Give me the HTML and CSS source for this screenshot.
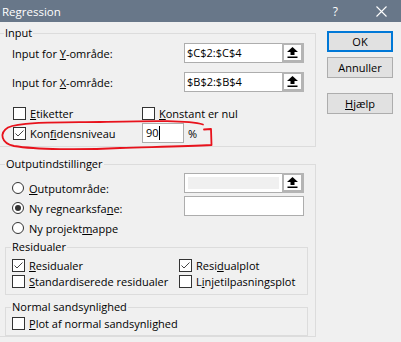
FILE: index.html
```html
<!DOCTYPE html>
<html lang="da">
<head>
    <meta charset="UTF-8">
    <title>Regression</title>
    <link rel="stylesheet" href="styles.css">
</head>
<body>

    <div class="titlebar">
        <span class="title">Regression</span>
        <span class="tb-help">?</span>
        <svg class="tb-close" width="11" height="11" viewBox="0 0 11 11">
            <path d="M0.5 0.5L10.5 10.5M10.5 0.5L0.5 10.5" stroke="#fff" stroke-width="1.1"/>
        </svg>
    </div>

    <div class="dialog">
        <div class="main">
            <fieldset class="group group-input">
                <legend>Input</legend>
                <div class="input-body">
                    <div class="range-row">
                        <span class="range-label">Input for <u>Y</u>-område:</span>
                        <div class="refedit">
                            <span class="ref-text">$C$2:$C$4</span>
                            <span class="ref-btn"><svg width="11" height="11" viewBox="0 0 11 11"><path d="M5.5 0L11 5H7.5V8H3.5V5H0Z" fill="#000"/><rect x="0.5" y="9.5" width="10" height="1.5" fill="#000"/></svg></span>
                        </div>
                    </div>
                    <div class="range-row">
                        <span class="range-label">Input for <u>X</u>-område:</span>
                        <div class="refedit">
                            <span class="ref-text">$B$2:$B$4</span>
                            <span class="ref-btn"><svg width="11" height="11" viewBox="0 0 11 11"><path d="M5.5 0L11 5H7.5V8H3.5V5H0Z" fill="#000"/><rect x="0.5" y="9.5" width="10" height="1.5" fill="#000"/></svg></span>
                        </div>
                    </div>

                    <div class="check-rows">
                        <div class="check-row">
                            <label class="check col-wide"><span class="box"></span><span><u>E</u>tiketter</span></label>
                            <label class="check"><span class="box"></span><span><u>K</u>onstant er nul</span></label>
                        </div>
                        <div class="check-row">
                            <label class="check col-wide"><span class="box checked"><svg width="11" height="11" viewBox="0 0 11 11"><path d="M1.5 5.5L4 8L9.5 2.5" fill="none" stroke="#444" stroke-width="1"/></svg></span><span>Kon<u>f</u>idensniveau</span></label>
                            <span class="level">90<span class="caret"></span></span>
                            <span class="percent">%</span>
                        </div>
                    </div>
                </div>
            </fieldset>

            <fieldset class="group group-output">
                <legend>Outputindstillinger</legend>
                <div class="out-grid">
                    <div class="radio-col">
                        <div class="radio-row"><span class="radio"></span><span><u>O</u>utputområde:</span></div>
                        <div class="radio-row"><span class="radio on"></span><span>Ny regnearksfa<u>n</u>e:</span></div>
                        <div class="radio-row"><span class="radio"></span><span>Ny projekt<u>m</u>appe</span></div>
                    </div>
                    <div class="box-col">
                        <div class="refedit disabled">
                            <span class="ref-text"></span>
                            <span class="ref-btn"><svg width="11" height="11" viewBox="0 0 11 11"><path d="M5.5 0L11 5H7.5V8H3.5V5H0Z" fill="#000"/><rect x="0.5" y="9.5" width="10" height="1.5" fill="#000"/></svg></span>
                        </div>
                        <div class="textbox"></div>
                    </div>
                </div>

                <fieldset class="group group-res">
                    <legend>Residualer</legend>
                    <div class="res-body">
                        <div class="res-row">
                            <label class="check col-res"><span class="box checked"><svg width="11" height="11" viewBox="0 0 11 11"><path d="M1.5 5.5L4 8L9.5 2.5" fill="none" stroke="#444" stroke-width="1"/></svg></span><span><u>R</u>esidualer</span></label>
                            <label class="check"><span class="box checked"><svg width="11" height="11" viewBox="0 0 11 11"><path d="M1.5 5.5L4 8L9.5 2.5" fill="none" stroke="#444" stroke-width="1"/></svg></span><span>Resi<u>d</u>ualplot</span></label>
                        </div>
                        <div class="res-row">
                            <label class="check col-res"><span class="box"></span><span><u>S</u>tandardiserede residualer</span></label>
                            <label class="check"><span class="box"></span><span>L<u>i</u>njetilpasningsplot</span></label>
                        </div>
                    </div>
                </fieldset>

                <fieldset class="group group-normal">
                    <legend>Normal sandsynlighed</legend>
                    <div class="normal-body">
                        <div class="res-row">
                            <label class="check"><span class="box"></span><span><u>P</u>lot af normal sandsynlighed</span></label>
                        </div>
                    </div>
                </fieldset>
            </fieldset>
        </div>

        <div class="buttons">
            <button class="btn btn-default">OK</button>
            <button class="btn">Annuller</button>
            <button class="btn btn-help"><u>H</u>jælp</button>
        </div>
    </div>

    <!-- rød markering tegnet oven på dialogen -->
    <svg class="scribble" width="401" height="342" viewBox="0 0 401 342">
        <path d="M204 129.5L211 129L211.5 145C185 146.5 150 147 120 148C80 150 35 149.5 14 146C1 143 -1 133 8 127.5C20 121.5 60 122.5 100 122C150 121 188 120 203 124.5"
              fill="none" stroke="#e8121c" stroke-width="1.8" stroke-linecap="round" stroke-linejoin="round"/>
    </svg>

</body>
</html>
```

FILE: styles.css
```css
body {
    margin: 0;
    width: 401px;
    height: 342px;
    overflow: hidden;
    position: relative;
    background-color: #f0f0f0;
    font-family: "Open Sans", "Noto Sans", sans-serif;
    font-size: 11px;
    color: #000;
}

u {
    text-underline-offset: 1px;
}

.titlebar {
    height: 22px;
    background-color: #687789;
    color: #fff;
    display: flex;
    align-items: center;
    padding-left: 2px;
    font-size: 11.5px;
}

.titlebar .title {
    flex: 1;
}

.tb-help {
    margin-right: 38px;
    font-size: 12px;
}

.tb-close {
    margin-right: 14px;
}

.dialog {
    display: flex;
    padding-top: 4px;
}

.main {
    width: 318px;
    margin-left: -2px;
}

/* gruppebokse */
.group {
    margin: 0;
    padding: 0;
    border: 1px solid #dcdcdc;
    min-width: 0;
}

.group legend {
    padding: 0 1px;
    line-height: 14px;
}

.group-input legend {
    margin-left: 5px;
}

.input-body {
    padding: 3px 11px 3px 13px;
}

.range-row {
    display: flex;
    align-items: center;
    height: 20px;
}

.range-row + .range-row {
    margin-top: 9px;
}

.range-label {
    width: 172px;
}

.refedit {
    width: 120px;
    height: 20px;
    box-sizing: border-box;
    border: 1px solid #adadad;
    background-color: #fff;
    display: flex;
}

.ref-text {
    flex: 1;
    padding-left: 2px;
    line-height: 18px;
}

.ref-btn {
    width: 22px;
    height: 20px;
    box-sizing: border-box;
    margin: -1px -1px -1px 0;
    border: 2px solid #b4b4b4;
    border-right-width: 3px;
    border-bottom-width: 3px;
    background-color: #fdfdfd;
    display: flex;
    align-items: center;
    justify-content: center;
}

.refedit.disabled .ref-text {
    margin: 3px;
    padding: 0;
    background-color: #f0f0f0;
}

.textbox {
    width: 120px;
    height: 20px;
    box-sizing: border-box;
    border: 1px solid #adadad;
    background-color: #fff;
}

.check-rows {
    margin-top: 11px;
    padding-left: 1px;
}

.check-row {
    display: flex;
    align-items: center;
    height: 20px;
}

.check {
    display: flex;
    align-items: center;
}

.col-wide {
    width: 129px;
}

.box {
    width: 13px;
    height: 13px;
    box-sizing: border-box;
    border: 1px solid #333;
    background-color: #fff;
    margin-right: 4px;
    display: flex;
}

.box svg {
    display: block;
}

.level {
    width: 42px;
    height: 20px;
    box-sizing: border-box;
    border: 1px solid #adadad;
    background-color: #fff;
    padding-left: 3px;
    line-height: 18px;
    display: flex;
    align-items: center;
}

.caret {
    width: 1px;
    height: 14px;
    background-color: #000;
}

.percent {
    margin-left: 4px;
}

/* output */
.group-output {
    margin-top: 10px;
    padding: 0 7px 0 6px;
}

.out-grid {
    display: grid;
    grid-template-columns: 179px 120px;
}

.radio-col {
    padding-top: 7px;
    padding-left: 7px;
}

.radio-row {
    display: flex;
    align-items: center;
    height: 20px;
}

.radio {
    width: 12px;
    height: 12px;
    box-sizing: border-box;
    border: 1px solid #333;
    border-radius: 50%;
    background-color: #fff;
    margin-right: 5px;
    display: flex;
    align-items: center;
    justify-content: center;
}

.radio.on::after {
    content: "";
    width: 6px;
    height: 6px;
    border-radius: 50%;
    background-color: #333;
}

.box-col {
    padding-top: 2px;
    display: flex;
    flex-direction: column;
    gap: 3px;
}

.group-res {
    margin-top: 2px;
}

.group-res legend,
.group-normal legend {
    margin-left: 5px;
}

.res-body {
    padding: 3px 0 5px 6px;
}

.res-row {
    display: flex;
    align-items: center;
    height: 16px;
}

.col-res {
    width: 167px;
}

.group-normal {
    margin-top: 5px;
}

.normal-body {
    padding: 1px 0 4px 6px;
}

/* knapper */
.buttons {
    width: 66px;
    margin-left: 11px;
    padding-top: 5px;
    display: flex;
    flex-direction: column;
}

.btn {
    height: 21px;
    box-sizing: border-box;
    border: 1px solid #adadad;
    background-color: #e1e1e1;
    font-family: inherit;
    font-size: 11px;
    color: #000;
    padding: 0;
    margin: 0 0 5px 0;
}

.btn-default {
    border: 2px solid #0078d7;
}

.btn-help {
    margin-top: 10px;
}

.scribble {
    position: absolute;
    top: 0;
    left: 0;
    pointer-events: none;
}
```
